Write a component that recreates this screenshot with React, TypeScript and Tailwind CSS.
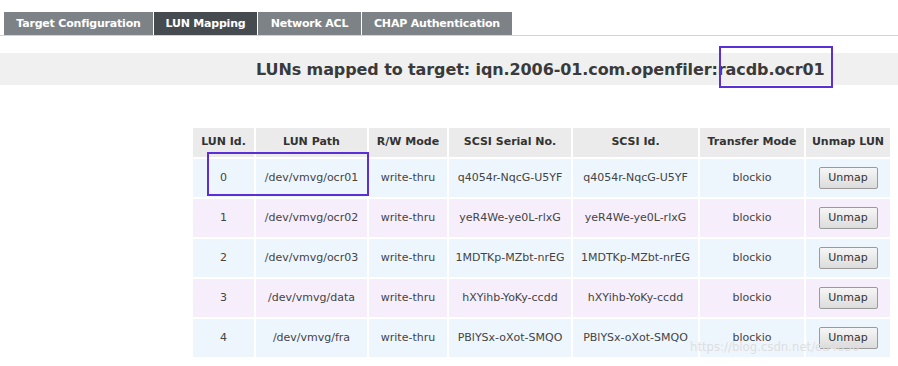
import React from 'react';

const tabs = [
  { label: 'Target Configuration', w: 'w-[149px]', active: false },
  { label: 'LUN Mapping', w: 'w-[103px]', active: true },
  { label: 'Network ACL', w: 'w-[103px]', active: false },
  { label: 'CHAP Authentication', w: 'w-[150px]', active: false },
];

const rows = [
  { id: '0', path: '/dev/vmvg/ocr01', serial: 'q4054r-NqcG-U5YF' },
  { id: '1', path: '/dev/vmvg/ocr02', serial: 'yeR4We-ye0L-rlxG' },
  { id: '2', path: '/dev/vmvg/ocr03', serial: '1MDTKp-MZbt-nrEG' },
  { id: '3', path: '/dev/vmvg/data', serial: 'hXYihb-YoKy-ccdd' },
  { id: '4', path: '/dev/vmvg/fra', serial: 'PBlYSx-oXot-SMQO' },
];

const headers = [
  { label: 'LUN Id.', w: 'w-[61px]' },
  { label: 'LUN Path', w: 'w-[111px]' },
  { label: 'R/W Mode', w: 'w-[78px]' },
  { label: 'SCSI Serial No.', w: 'w-[122px]' },
  { label: 'SCSI Id.', w: 'w-[125px]' },
  { label: 'Transfer Mode', w: 'w-[104px]' },
  { label: 'Unmap LUN', w: 'w-[84px]' },
];

const App: React.FC = () => {
  return (
    <div className="relative w-[898px] h-[366px] bg-white overflow-hidden font-['DejaVu_Sans',sans-serif] text-[#333]">
      {/* Tabs */}
      <div className="pt-3 border-b border-[#d4d4d4]">
        <div className="flex gap-px pl-1">
          {tabs.map((t) => (
            <div
              key={t.label}
              className={`${t.w} h-[23px] pt-[2px] flex items-center justify-center text-[11px] font-bold text-white tracking-[-0.2px] ${
                t.active ? 'bg-[#464b50]' : 'bg-[#7d8287]'
              }`}
            >
              {t.label}
            </div>
          ))}
        </div>
      </div>

      {/* Title band */}
      <div className="mt-[17px] h-[32px] bg-[#f0f0f0] flex items-center pl-[256px] pt-[2px]">
        <h2 className="text-[16px] font-bold text-[#3a3a3a] tracking-[-0.1px]">
          LUNs mapped to target: iqn.2006-01.com.openfiler:racdb.ocr01
        </h2>
      </div>

      {/* Table */}
      <div className="mt-[41px] pl-[191px]">
        <table className="border-separate border-spacing-[2px] text-[11px] text-[#444]">
          <thead>
            <tr>
              {headers.map((h) => (
                <th key={h.label} className={`${h.w} h-[29px] bg-[#ebebeb] font-bold text-[#333] text-center p-0`}>
                  {h.label}
                </th>
              ))}
            </tr>
          </thead>
          <tbody>
            {rows.map((r, i) => {
              const bg = i % 2 === 0 ? 'bg-[#eef6fd]' : 'bg-[#f7eefb]';
              return (
                <tr key={r.id}>
                  <td className={`${bg} h-[38px] text-center p-0`}>{r.id}</td>
                  <td className={`${bg} text-center p-0`}>{r.path}</td>
                  <td className={`${bg} text-center p-0`}>write-thru</td>
                  <td className={`${bg} text-center p-0`}>{r.serial}</td>
                  <td className={`${bg} text-center p-0`}>{r.serial}</td>
                  <td className={`${bg} text-center p-0`}>blockio</td>
                  <td className={`${bg} text-center p-0`}>
                    <button className="w-[59px] h-[22px] border border-[#9a9a9a] rounded-[2px] bg-gradient-to-b from-[#f6f6f6] to-[#dcdcdc] text-[11px] text-[#333]">
                      Unmap
                    </button>
                  </td>
                </tr>
              );
            })}
          </tbody>
        </table>
      </div>

      {/* Annotation boxes */}
      <div className="absolute left-[719px] top-[46px] w-[114px] h-[42px] border-2 border-[#5a2fd6]" />
      <div className="absolute left-[207px] top-[152px] w-[162px] h-[44px] border-2 border-[#5a2fd6]" />

      {/* Watermark */}
      <div className="absolute left-[690px] top-[337px] text-[13px] text-[#dedede] font-['DejaVu_Sans_Condensed',sans-serif]">
        https://blog.csdn.net/ea4836
      </div>
    </div>
  );
};

export default App;
